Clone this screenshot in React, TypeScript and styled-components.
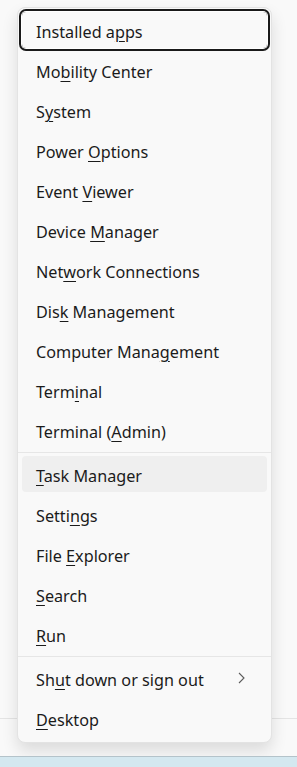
import styled, { createGlobalStyle } from "styled-components"

type Entry = { label: string; key: number; focused?: boolean; hover?: boolean; sub?: boolean }

const groups: Entry[][] = [
    [
        { label: "Installed apps", key: 11, focused: true },
        { label: "Mobility Center", key: 2 },
        { label: "System", key: 1 },
        { label: "Power Options", key: 6 },
        { label: "Event Viewer", key: 6 },
        { label: "Device Manager", key: 7 },
        { label: "Network Connections", key: 3 },
        { label: "Disk Management", key: 3 },
        { label: "Computer Management", key: 13 },
        { label: "Terminal", key: 4 },
        { label: "Terminal (Admin)", key: 10 },
    ],
    [
        { label: "Task Manager", key: 0, hover: true },
        { label: "Settings", key: 5 },
        { label: "File Explorer", key: 5 },
        { label: "Search", key: 0 },
        { label: "Run", key: 0 },
    ],
    [
        { label: "Shut down or sign out", key: 2, sub: true },
        { label: "Desktop", key: 0 },
    ],
]

export default function App(){
    return (
        <Screen>
            <GlobalStyle />
            <Desk>
                <Menu>
                    {groups.map((group, g) => (
                        <Group key={g}>
                            {group.map(item => (
                                <Item key={item.label} $focused={item.focused} $hover={item.hover}>
                                    <Label>
                                        {item.label.slice(0, item.key)}
                                        <u>{item.label[item.key]}</u>
                                        {item.label.slice(item.key + 1)}
                                    </Label>
                                    {item.sub && (
                                        <svg width="7" height="12" viewBox="0 0 7 12">
                                            <path d="M1 1 L6 6 L1 11" fill="none" stroke="#5c5c5c" strokeWidth="1.1" />
                                        </svg>
                                    )}
                                </Item>
                            ))}
                        </Group>
                    ))}
                </Menu>
            </Desk>
            <Taskbar />
        </Screen>
    )
}

const GlobalStyle = createGlobalStyle`
    body {
        margin: 0;
        background: #f9f9f9;
        font-family: "Noto Sans", "Open Sans", sans-serif;
    }
`

const Screen = styled.div`
    display: flex;
    flex-direction: column;
    width: 297px;
    height: 767px;
    overflow: hidden;
`

const Desk = styled.div`
    height: 756px;
    padding: 7px 0 0 17px;
    box-sizing: border-box;
    background: linear-gradient(#f9f9f9 0 718px, #e4e4e4 718px 719px, #f9f9f9 719px);
`

const Taskbar = styled.div`
    flex: 1;
    border-top: 1px solid #b4c3ca;
    background: #d4e8f0;
`

const Menu = styled.div`
    width: 255px;
    box-sizing: border-box;
    padding: 2px 0;
    background: #f9f9f9;
    border: 1px solid #e3e3e3;
    border-radius: 8px;
    box-shadow: 0 8px 16px rgba(0, 0, 0, 0.12);
`

const Group = styled.div`
    padding: 2px 0 0;
    & + & {
        margin-top: 2px;
        border-top: 1px solid #e6e6e6;
        padding-top: 3px;
    }
`

const Item = styled.div<{ $focused?: boolean; $hover?: boolean }>`
    display: flex;
    align-items: center;
    justify-content: space-between;
    height: 36px;
    margin: 0 4px 4px;
    padding: 0 22px 0 14px;
    border-radius: 4px;
    color: #1b1b1b;
    font-size: 16.2px;
    background: ${p => (p.$hover ? "#efefef" : "transparent")};
    box-shadow: ${p => (p.$focused ? "0 0 0 1px #ffffff, 0 0 0 3px #1a1a1a" : "none")};
`

const Label = styled.span`
    padding-top: 3px;
    u {
        text-underline-offset: 3px;
        text-decoration-thickness: 1px;
    }
`
